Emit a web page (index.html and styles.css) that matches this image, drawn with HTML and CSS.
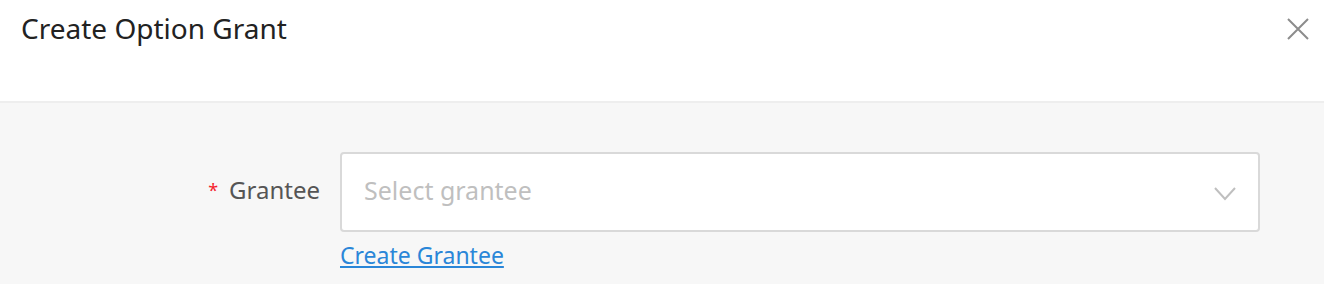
FILE: index.html
```html
<!DOCTYPE html>
<html>
<head>
<meta charset="utf-8">
<link rel="stylesheet" href="styles.css">
</head>
<body>
<div class="modal">
  <div class="header">
    <h1 class="title">Create Option Grant</h1>
    <button class="close" aria-label="Close">
      <svg width="24" height="24" viewBox="0 0 24 24"><path d="M2 2 L22 22 M22 2 L2 22" stroke="#8c8c8c" stroke-width="2" fill="none"/></svg>
    </button>
  </div>
  <div class="body">
    <div class="row">
      <label class="label"><span class="req">*</span>Grantee</label>
      <div class="field">
        <div class="select">
          <span class="placeholder">Select grantee</span>
          <svg class="arrow" width="22" height="14" viewBox="0 0 22 14"><path d="M1 1 L11 12 L21 1" stroke="#bfbfbf" stroke-width="2" fill="none"/></svg>
        </div>
        <a class="link" href="#">Create Grantee</a>
      </div>
    </div>
  </div>
</div>
</body>
</html>
```
FILE: styles.css
```css
html, body { margin: 0; padding: 0; }
body { font-family: "Noto Sans", "Open Sans", sans-serif; background: #fff; width: 1324px; height: 284px; overflow: hidden; }
.modal { display: flex; flex-direction: column; height: 284px; }
.header { height: 101px; border-bottom: 2px solid #eeeeee; display: flex; justify-content: space-between; align-items: flex-start; padding: 0 14px 0 21px; box-sizing: content-box; }
.title { margin: 8px 0 0; font-size: 28px; font-weight: 400; color: #222; line-height: 40px; }
.close { margin-top: 17px; background: none; border: 0; padding: 0; width: 24px; height: 24px; cursor: pointer; }
.close svg { display: block; }
.body { flex: 1; background: #f7f7f7; padding-top: 49px; }
.row { display: flex; align-items: flex-start; }
.label { width: 320px; box-sizing: border-box; text-align: right; font-size: 24px; color: #555; line-height: 76px; margin-right: 20px; }
.req { color: #f5222d; font-size: 18px; margin-right: 11px; position: relative; top: -2px; }
.field { width: 920px; }
.select { height: 76px; border: 2px solid #d9d9d9; border-radius: 4px; background: #fff; display: flex; align-items: center; justify-content: space-between; padding: 0 22px; }
.placeholder { font-size: 25px; color: #bfbfbf; margin-top: -4px; }
.arrow { display: block; margin-top: 4px; }
.link { display: inline-block; margin-top: 8px; font-size: 23px; color: #2a86d8; text-decoration: underline; line-height: 30px; }
```
